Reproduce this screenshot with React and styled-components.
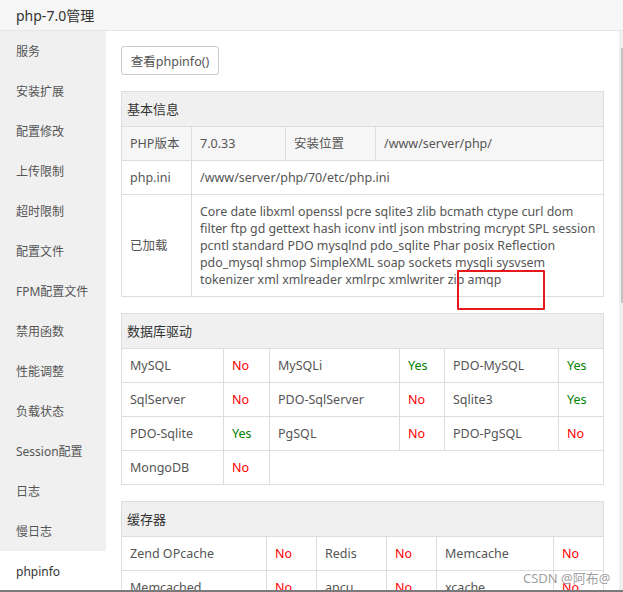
import React from 'react'
import styled, { createGlobalStyle } from 'styled-components'

const GlobalStyle = createGlobalStyle`
    html, body {
        margin: 0;
        padding: 0;
        background: #fff;
    }
    body {
        font-family: "Noto Sans", "Noto Sans CJK SC", sans-serif;
        color: #555;
    }
`

const Janela = styled.div`
    position: relative;
    width: 623px;
    height: 592px;
    overflow: hidden;
    display: flex;
    flex-direction: column;
    box-sizing: border-box;
    border-bottom: 2px solid #7a7a7a;
`

const Cabecalho = styled.div`
    height: 30px;
    flex: none;
    display: flex;
    align-items: center;
    padding-left: 16px;
    background: #f6f6f6;
    border-bottom: 1px solid #e6e6e6;
    font-size: 14px;
    color: #333;
`

const Corpo = styled.div`
    flex: 1;
    display: flex;
    min-height: 0;
`

const Menu = styled.ul`
    width: 106px;
    flex: none;
    margin: 0;
    padding: 0;
    list-style: none;
    background: #f0f0f0;
`

const ItemMenu = styled.li`
    height: 40px;
    line-height: 41px;
    padding-left: 16px;
    font-size: 12px;
    color: ${props => props.ativo ? '#333' : '#555'};
    background: ${props => props.ativo ? '#fff' : 'transparent'};
`

const Conteudo = styled.div`
    flex: 1;
    padding: 15px 16px 0 15px;
    overflow: hidden;
`

const Botao = styled.button`
    display: block;
    height: 29px;
    width: 98px;
    padding: 0;
    border: 1px solid #ccc;
    border-radius: 3px;
    background: #fff;
    font-family: inherit;
    font-size: 12.5px;
    color: #555;
`

const Tabela = styled.table`
    width: 482px;
    margin-top: 16px;
    border-collapse: collapse;
    table-layout: fixed;
    font-size: 12.5px;
    color: #555;

    td, th {
        border: 1px solid #ddd;
        padding: 0 8px;
        height: 33px;
        line-height: 17px;
        text-align: left;
        font-weight: normal;
    }
`

const Titulo = styled.th`
    && {
        height: 34px;
        padding-left: 5px;
        background: #f0f0f0;
        color: #333;
        font-size: 13px;
    }
`

const Linha = styled.tr`
    background: ${props => props.cinza ? '#f6f6f6' : '#fff'};
`

const Celula = styled.td`
    && {
        padding: 8px 2px 8px 8px;
        font-size: 12.4px;
    }
`

const Status = styled.td`
    color: ${props => props.ok ? '#008000' : '#f00'};
`

const Marcacao = styled.div`
    position: absolute;
    left: 457px;
    top: 270px;
    width: 84px;
    height: 36px;
    border: 2px solid #e8191c;
    border-radius: 1px;
`

const MarcaDagua = styled.div`
    position: absolute;
    left: 523px;
    top: 568px;
    font-size: 13px;
    color: rgba(140, 140, 140, 0.85);
    text-shadow: 0 0 2px #fff;
`

const Trilho = styled.div`
    width: 4px;
    flex: none;
    background: #f0f0f0;
    display: flex;
    justify-content: flex-end;
`

const Polegar = styled.div`
    width: 2px;
    height: 255px;
    margin-top: 17px;
    background: #c4c4c4;
`

const menu = ['服务', '安装扩展', '配置修改', '上传限制', '超时限制', '配置文件', 'FPM配置文件',
    '禁用函数', '性能调整', '负载状态', 'Session配置', '日志', '慢日志', 'phpinfo']

const carregados = 'Core date libxml openssl pcre sqlite3 zlib bcmath ctype curl dom filter ftp gd gettext hash iconv intl json mbstring mcrypt SPL session pcntl standard PDO mysqlnd pdo_sqlite Phar posix Reflection pdo_mysql shmop SimpleXML soap sockets mysqli sysvsem tokenizer xml xmlreader xmlrpc xmlwriter zip amqp'

const drivers = [
    [['MySQL', false], ['MySQLi', true], ['PDO-MySQL', true]],
    [['SqlServer', false], ['PDO-SqlServer', false], ['Sqlite3', true]],
    [['PDO-Sqlite', true], ['PgSQL', false], ['PDO-PgSQL', false]],
    [['MongoDB', false]]
]

const caches = [
    [['Zend OPcache', false], ['Redis', false], ['Memcache', false]],
    [['Memcached', false], ['apcu', false], ['xcache', false]]
]

function TabelaStatus({ titulo, larguras, linhas }) {
    return (
        <Tabela>
            <colgroup>
                {larguras.map((l, i) => <col key={i} style={{ width: l }} />)}
            </colgroup>
            <thead>
                <tr><Titulo colSpan={6}>{titulo}</Titulo></tr>
            </thead>
            <tbody>
                {linhas.map((linha, i) => (
                    <Linha key={i}>
                        {linha.map(([nome, ok]) => (
                            <React.Fragment key={nome}>
                                <td>{nome}</td>
                                <Status ok={ok}>{ok ? 'Yes' : 'No'}</Status>
                            </React.Fragment>
                        ))}
                        {linha.length < 3 && <td colSpan={(3 - linha.length) * 2}></td>}
                    </Linha>
                ))}
            </tbody>
        </Tabela>
    )
}

export default function App() {
    return (
        <Janela>
            <GlobalStyle />
            <Cabecalho>php-7.0管理</Cabecalho>
            <Corpo>
                <Menu>
                    {menu.map(item => (
                        <ItemMenu key={item} ativo={item === 'phpinfo'}>{item}</ItemMenu>
                    ))}
                </Menu>
                <Conteudo>
                    <Botao>查看phpinfo()</Botao>
                    <Tabela>
                        <colgroup>
                            <col style={{ width: 70 }} />
                            <col style={{ width: 94 }} />
                            <col style={{ width: 90 }} />
                            <col style={{ width: 228 }} />
                        </colgroup>
                        <thead>
                            <tr><Titulo colSpan={4}>基本信息</Titulo></tr>
                        </thead>
                        <tbody>
                            <Linha cinza>
                                <td>PHP版本</td>
                                <td>7.0.33</td>
                                <td>安装位置</td>
                                <td>/www/server/php/</td>
                            </Linha>
                            <Linha>
                                <td>php.ini</td>
                                <td colSpan={3}>/www/server/php/70/etc/php.ini</td>
                            </Linha>
                            <Linha>
                                <td>已加载</td>
                                <Celula colSpan={3}>{carregados}</Celula>
                            </Linha>
                        </tbody>
                    </Tabela>
                    <TabelaStatus titulo="数据库驱动" larguras={[102, 46, 130, 45, 114, 45]} linhas={drivers} />
                    <TabelaStatus titulo="缓存器" larguras={[145, 50, 70, 50, 117, 50]} linhas={caches} />
                </Conteudo>
                <Trilho><Polegar /></Trilho>
            </Corpo>
            <Marcacao />
            <MarcaDagua>CSDN @阿布@</MarcaDagua>
        </Janela>
    )
}
